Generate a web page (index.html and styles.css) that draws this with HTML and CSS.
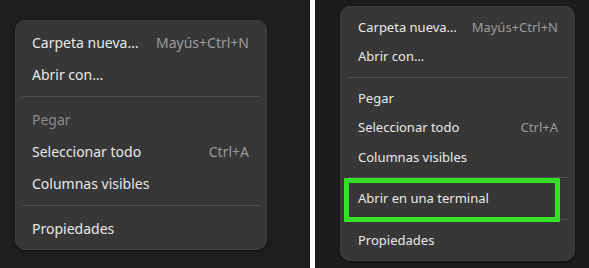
FILE: index.html
```html
<!DOCTYPE html>
<html lang="es">
  <head>
    <meta charset="UTF-8" />
    <meta name="viewport" content="width=device-width, initial-scale=1.0" />
    <title>Menú contextual</title>
    <link rel="stylesheet" href="styles.css">
  </head>
  <body>
    <section class="pane pane-left">
      <ul class="menu menu-lg">
        <li class="item"><span>Carpeta nueva…</span><span class="accel">Mayús+Ctrl+N</span></li>
        <li class="item"><span>Abrir con…</span></li>
        <li class="sep"></li>
        <li class="item disabled"><span>Pegar</span></li>
        <li class="item"><span>Seleccionar todo</span><span class="accel">Ctrl+A</span></li>
        <li class="item"><span>Columnas visibles</span></li>
        <li class="sep"></li>
        <li class="item"><span>Propiedades</span></li>
      </ul>
    </section>

    <div class="divider"></div>

    <section class="pane pane-right">
      <ul class="menu menu-sm">
        <li class="item"><span>Carpeta nueva…</span><span class="accel">Mayús+Ctrl+N</span></li>
        <li class="item"><span>Abrir con…</span></li>
        <li class="sep"></li>
        <li class="item"><span>Pegar</span></li>
        <li class="item"><span>Seleccionar todo</span><span class="accel">Ctrl+A</span></li>
        <li class="item"><span>Columnas visibles</span></li>
        <li class="sep"></li>
        <li class="item marked"><span>Abrir en una terminal</span></li>
        <li class="sep"></li>
        <li class="item"><span>Propiedades</span></li>
      </ul>
    </section>
  </body>
</html>
```

FILE: styles.css
```css
* {
  margin: 0;
  padding: 0;
  box-sizing: border-box;
}

body {
  display: flex;
  height: 100vh;
  font-family: "Noto Sans", "DejaVu Sans", sans-serif;
  background-color: #1e1e1e;
  color: #e8e8e8;
  overflow: hidden;
}

.pane {
  background-color: #1e1e1e;
}

.pane-left {
  width: 310px;
  padding: 20px 0 0 15px;
}

.pane-right {
  flex: 1;
  padding: 6px 0 0 25px;
  background-color: #1c1c1c;
}

.divider {
  width: 5px;
  background-color: #ffffff;
}

.menu {
  list-style: none;
  background-color: #373737;
  border: 1px solid #3f3f3f;
  border-radius: 10px;
  box-shadow: 0 1px 3px rgba(0, 0, 0, 0.5);
}

.menu-lg {
  width: 252px;
  padding: 5px 0;
  font-size: 14px;
}

.menu-sm {
  width: 235px;
  padding: 5px 0;
  font-size: 13px;
}

.item {
  display: flex;
  align-items: center;
  justify-content: space-between;
  gap: 12px;
  white-space: nowrap;
}

.menu-lg .item {
  height: 32px;
  padding: 0 17px 0 16px;
}

.menu-sm .item {
  height: 29.5px;
  padding: 0 16px 0 17px;
}

.accel {
  color: #9a9a9a;
}

.disabled {
  color: #8a8a8a;
}

.sep {
  height: 1px;
  background-color: #4e4e4e;
}

.menu-lg .sep {
  margin: 6px 6px;
}

.menu-sm .sep {
  margin: 5.5px 5px 5.5px 7px;
}

/* green highlight drawn over the screenshot */
.marked {
  position: relative;
}

.marked::after {
  content: "";
  position: absolute;
  top: -6px;
  bottom: -9px;
  left: 3px;
  right: 14px;
  border: 5px solid #34e024;
}
```
